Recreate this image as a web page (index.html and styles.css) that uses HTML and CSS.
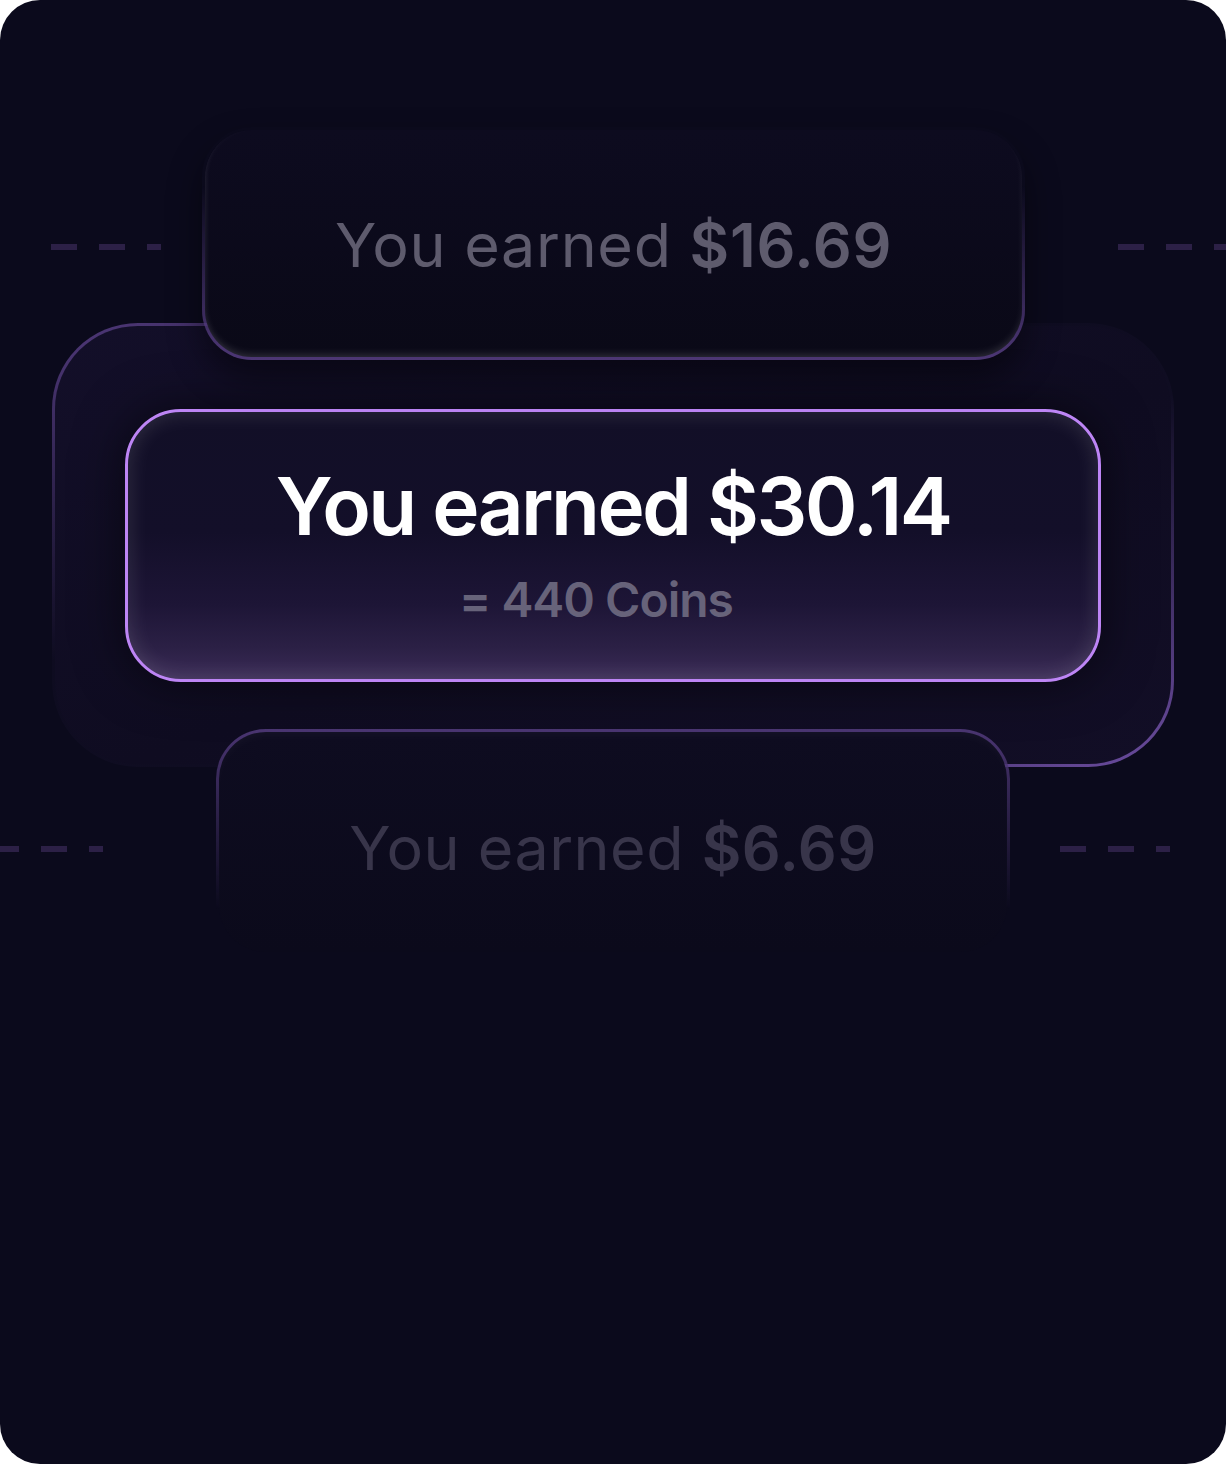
FILE: index.html
```html
<!DOCTYPE html>
<html lang="en">
<head>
  <meta charset="UTF-8" />
  <meta name="viewport" content="width=device-width, initial-scale=1.0"/>
  <title>Earnings</title>
  <link rel="stylesheet" href="styles.css">
</head>
<body>
  <div class="frame">
    <div class="row row-top">
      <div class="dashes dashes-tl"></div>
      <div class="card card-top">
        <p class="amount">You earned <b>$16.69</b></p>
      </div>
      <div class="dashes dashes-tr"></div>
    </div>

    <div class="focus">
      <div class="card-main">
        <p class="main-amount">You earned $30.14</p>
        <p class="coins">= 440 Coins</p>
      </div>
    </div>

    <div class="row row-bottom">
      <div class="dashes dashes-bl"></div>
      <div class="card card-bottom">
        <p class="amount amount-faded">You earned <b>$6.69</b></p>
      </div>
      <div class="dashes dashes-br"></div>
    </div>
  </div>
</body>
</html>
```

FILE: styles.css
```css
* {
  margin: 0;
  padding: 0;
  box-sizing: border-box;
}

body {
  background: #fff;
  font-family: 'Inter', 'Liberation Sans', sans-serif;
}

.frame {
  width: 1226px;
  height: 1464px;
  border-radius: 40px;
  background: #0b0a1c;
  padding-top: 127px;
  overflow: hidden;
}

.row {
  display: flex;
  align-items: center;
  position: relative;
  z-index: 1;
}

.dashes {
  height: 6px;
  margin-top: 6px;
  background: repeating-linear-gradient(to right, #2c2046 0 26px, transparent 26px 48px);
}

.dashes-tl {
  width: 110px;
  margin-left: 51px;
  margin-right: 41px;
}

.dashes-tr {
  width: 108px;
  margin-left: 93px;
}

.row-bottom {
  margin-top: -38px;
}

.dashes-bl {
  width: 103px;
  margin-right: 113px;
  margin-top: 14px;
  background-position: -7px 0;
}

.dashes-br {
  width: 110px;
  margin-left: 50px;
  margin-top: 14px;
}

.card {
  display: flex;
  align-items: center;
  justify-content: center;
  border: 3px solid transparent;
  border-radius: 50px;
}

.card-top {
  width: 823px;
  height: 233px;
  background:
    linear-gradient(#0d0b1f, #0a0917) padding-box,
    linear-gradient(to bottom, rgba(77, 55, 117, 0) 25%, #4d3775) border-box;
  box-shadow:
    inset 0 -5px 9px -3px rgba(255, 255, 255, 0.16),
    inset 4px 0 10px -6px rgba(255, 255, 255, 0.08),
    0 18px 34px rgba(0, 0, 0, 0.45);
}

.card-bottom {
  width: 794px;
  height: 226px;
  background:
    linear-gradient(#0e0c20, #0b0a1b) padding-box,
    linear-gradient(to bottom, #4a3571, rgba(74, 53, 113, 0) 80%) border-box;
  box-shadow: inset 0 6px 14px -6px rgba(255, 255, 255, 0.05);
}

.amount {
  font-size: 61px;
  font-weight: 400;
  color: #5e5b6d;
  letter-spacing: 0.7px;
  margin-top: 2px;
}

.amount b {
  font-weight: 600;
}

.amount-faded {
  color: #38354a;
  letter-spacing: 0.5px;
  margin-top: 12px;
}

.focus {
  position: relative;
  z-index: 0;
  width: 1122px;
  height: 444px;
  margin: -37px 0 0 52px;
  padding: 83px 70px 82px;
  border: 3px solid transparent;
  border-radius: 86px;
  background:
    linear-gradient(160deg, #130f29, #0f0c21 55%, #120e26) padding-box,
    linear-gradient(to bottom right, #50397a, rgba(80, 57, 122, 0.05) 38%, rgba(108, 77, 160, 0.05) 58%, #6c4da0) border-box;
}

.card-main {
  height: 273px;
  border: 3px solid #bd85f5;
  border-radius: 56px;
  background: linear-gradient(to bottom, #120f27 0%, #130f29 45%, #1d1536 72%, #2b2045 88%, #3a2b56 100%);
  box-shadow:
    inset 0 0 22px rgba(255, 255, 255, 0.14),
    0 0 50px rgba(0, 0, 0, 0.55);
  display: flex;
  flex-direction: column;
  align-items: center;
  padding-top: 54px;
}

.main-amount {
  font-size: 80px;
  font-weight: 600;
  color: #fff;
  letter-spacing: -2.6px;
  line-height: 1;
}

.coins {
  margin: 30px 34px 0 0;
  font-size: 48px;
  font-weight: 600;
  color: #67637a;
  letter-spacing: -1px;
  line-height: 1;
}
```
